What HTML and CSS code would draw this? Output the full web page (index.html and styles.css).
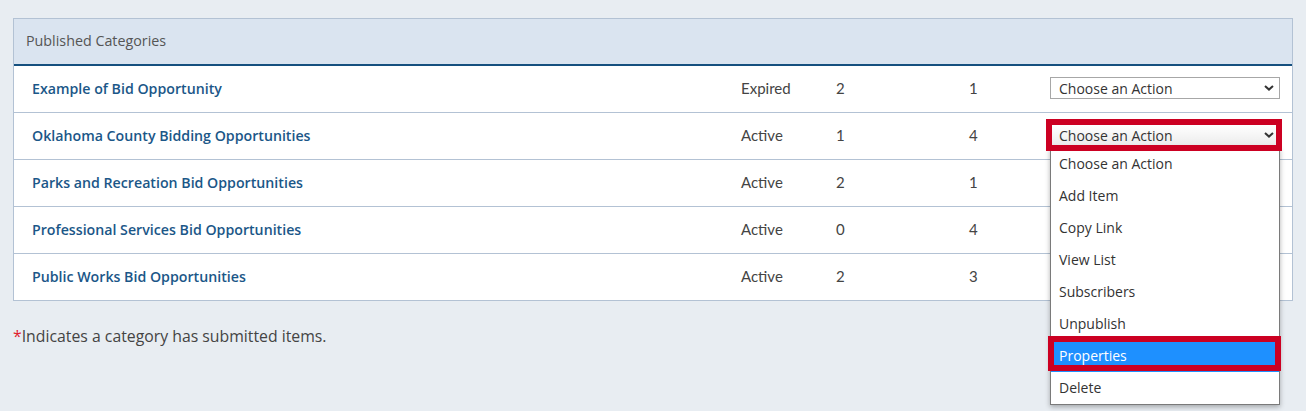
FILE: index.html
```html
<!DOCTYPE html>
<html lang="en">
<head>
<meta charset="utf-8">
<title>Published Categories</title>
<link rel="stylesheet" href="styles.css">
</head>
<body>
<div class="page">
  <div class="panel">
    <div class="panel-head">Published Categories</div>
    <div class="row">
      <a class="name" href="#">Example of Bid Opportunity</a>
      <span class="cell">Expired</span>
      <span class="cell">2</span>
      <span class="cell">1</span>
      <div class="select"><span>Choose an Action</span><svg class="chev" viewBox="0 0 10 6" width="10" height="6"><path d="M1 1 L5 4.6 L9 1" fill="none" stroke="#333" stroke-width="2"/></svg></div>
    </div>
    <div class="row">
      <a class="name" href="#">Oklahoma County Bidding Opportunities</a>
      <span class="cell">Active</span>
      <span class="cell">1</span>
      <span class="cell">4</span>
      <div class="select-wrap">
        <div class="select open"><span>Choose an Action</span><svg class="chev" viewBox="0 0 10 6" width="10" height="6"><path d="M1 1 L5 4.6 L9 1" fill="none" stroke="#333" stroke-width="2"/></svg></div>
        <div class="mark mark-select"></div>
        <ul class="menu">
          <li>Choose an Action</li>
          <li>Add Item</li>
          <li>Copy Link</li>
          <li>View List</li>
          <li>Subscribers</li>
          <li>Unpublish</li>
          <li class="hl">Properties</li>
          <li>Delete</li>
        </ul>
        <div class="mark mark-item"></div>
      </div>
    </div>
    <div class="row">
      <a class="name" href="#">Parks and Recreation Bid Opportunities</a>
      <span class="cell">Active</span>
      <span class="cell">2</span>
      <span class="cell">1</span>
      <div class="select covered"><span>Choose an Action</span><svg class="chev" viewBox="0 0 10 6" width="10" height="6"><path d="M1 1 L5 4.6 L9 1" fill="none" stroke="#333" stroke-width="2"/></svg></div>
    </div>
    <div class="row">
      <a class="name" href="#">Professional Services Bid Opportunities</a>
      <span class="cell">Active</span>
      <span class="cell">0</span>
      <span class="cell">4</span>
      <div class="select covered"><span>Choose an Action</span><svg class="chev" viewBox="0 0 10 6" width="10" height="6"><path d="M1 1 L5 4.6 L9 1" fill="none" stroke="#333" stroke-width="2"/></svg></div>
    </div>
    <div class="row">
      <a class="name" href="#">Public Works Bid Opportunities</a>
      <span class="cell">Active</span>
      <span class="cell">2</span>
      <span class="cell">3</span>
      <div class="select covered"><span>Choose an Action</span><svg class="chev" viewBox="0 0 10 6" width="10" height="6"><path d="M1 1 L5 4.6 L9 1" fill="none" stroke="#333" stroke-width="2"/></svg></div>
    </div>
  </div>
  <p class="note"><span class="star">*</span>Indicates a category has submitted items.</p>
</div>
</body>
</html>
```

FILE: styles.css
```css
html, body {
  margin: 0;
  padding: 0;
  background: #e8edf2;
  font-family: "Open Sans", "Noto Sans", sans-serif;
}
.page {
  padding: 18px 13px 0 13px;
  width: 1280px;
  min-height: 411px;
  box-sizing: content-box;
}
.panel {
  border: 1px solid #b3c2d4;
  background: #fff;
}
.panel-head {
  height: 45px;
  line-height: 44px;
  padding-left: 12px;
  background: #dae4f0;
  border-bottom: 2px solid #15507f;
  color: #555;
  font-size: 14.3px;
}
.row {
  display: grid;
  grid-template-columns: 709px 95px 133px 81px 230px;
  align-items: center;
  height: 44px;
  padding: 0 12px 2px 18px;
  border-bottom: 1px solid #b3c2d4;
}
.row:last-child {
  border-bottom: none;
}
.name {
  color: #1b5788;
  font-weight: 600;
  font-size: 14.2px;
  text-decoration: none;
}
.cell {
  font-family: Lato, "Open Sans", sans-serif;
  font-size: 15px;
  color: #444;
}
.select {
  height: 20px;
  border: 1px solid #a7a7a7;
  background: #fff;
  display: flex;
  align-items: center;
  justify-content: space-between;
  padding: 0 5px 0 8px;
  font-size: 14px;
  color: #333;
}
.select.covered {
  visibility: hidden;
}
.select.open {
  background: linear-gradient(#fff, #ececec);
}
.chev {
  display: block;
}
.select-wrap {
  position: relative;
}
.mark {
  position: absolute;
  border: 6px solid #cc0022;
  box-sizing: border-box;
  pointer-events: none;
}
.mark-select {
  left: -4px;
  top: -5px;
  width: 236px;
  height: 32px;
  z-index: 3;
}
.menu {
  position: absolute;
  left: 0;
  top: 23px;
  width: 228px;
  margin: 0;
  padding: 0;
  list-style: none;
  background: #fff;
  border: 1px solid #7a7a7a;
  box-shadow: 0 2px 5px rgba(0,0,0,0.3);
  z-index: 2;
}
.menu li {
  height: 32px;
  line-height: 32px;
  padding-left: 8px;
  font-size: 14px;
  color: #333;
}
.menu li.hl {
  background: #1e90ff;
  color: #fff;
}
.mark-item {
  left: -2px;
  top: 212px;
  width: 233px;
  height: 35px;
  z-index: 3;
}
.note {
  margin: 24px 0 0 0;
  font-size: 15.8px;
  color: #444;
}
.star {
  color: #e0202e;
}
```
